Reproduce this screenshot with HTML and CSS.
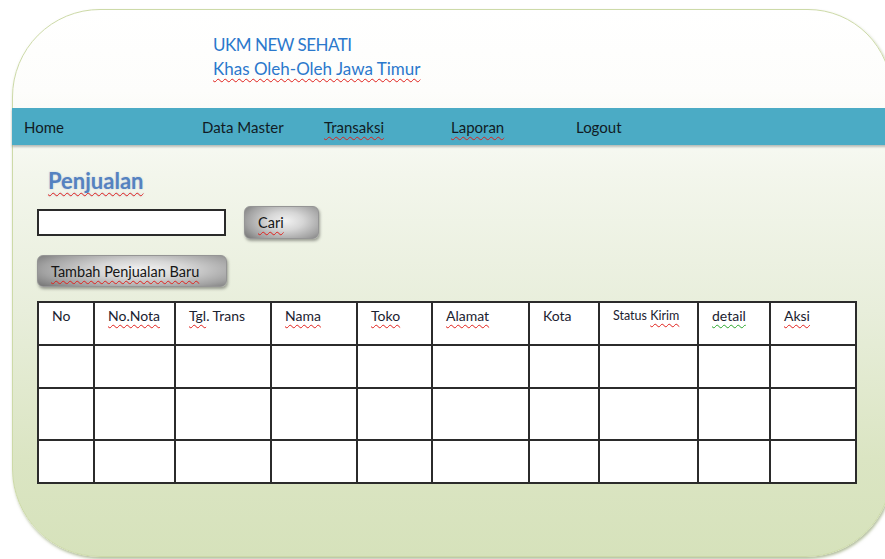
FILE: index.html
```html
<!DOCTYPE html>
<html lang="id">
<head>
<meta charset="utf-8">
<title>UKM New Sehati - Penjualan</title>
<link rel="stylesheet" href="styles.css">
</head>
<body>
<div class="frame">
  <header class="brand">
    <div class="brand-name">UKM NEW SEHATI</div>
    <div class="brand-tag"><span class="typo">Khas Oleh-Oleh Jawa Timur</span></div>
  </header>

  <nav class="menu">
    <a class="menu-item w-home">Home</a>
    <a class="menu-item w-master">Data Master</a>
    <a class="menu-item w-trans"><span class="typo">Transaksi</span></a>
    <a class="menu-item w-lap"><span class="typo">Laporan</span></a>
    <a class="menu-item">Logout</a>
  </nav>

  <main class="content">
    <h1 class="page-title"><span class="typo">Penjualan</span></h1>

    <div class="search-row">
      <input class="search-input" type="text">
      <button class="btn btn-cari"><span class="typo">Cari</span></button>
    </div>

    <button class="btn btn-add"><span class="typo">Tambah Penjualan Baru</span></button>

    <div class="grid">
      <div class="cell head">No</div>
      <div class="cell head"><span class="typo">No.Nota</span></div>
      <div class="cell head"><span class="typo">Tgl</span>. Trans</div>
      <div class="cell head"><span class="typo">Nama</span></div>
      <div class="cell head"><span class="typo">Toko</span></div>
      <div class="cell head"><span class="typo">Alamat</span></div>
      <div class="cell head">Kota</div>
      <div class="cell head small">Status <span class="typo">Kirim</span></div>
      <div class="cell head"><span class="grammar">detail</span></div>
      <div class="cell head"><span class="typo">Aksi</span></div>

      <div class="cell"></div><div class="cell"></div><div class="cell"></div><div class="cell"></div><div class="cell"></div>
      <div class="cell"></div><div class="cell"></div><div class="cell"></div><div class="cell"></div><div class="cell"></div>

      <div class="cell tall"></div><div class="cell tall"></div><div class="cell tall"></div><div class="cell tall"></div><div class="cell tall"></div>
      <div class="cell tall"></div><div class="cell tall"></div><div class="cell tall"></div><div class="cell tall"></div><div class="cell tall"></div>

      <div class="cell"></div><div class="cell"></div><div class="cell"></div><div class="cell"></div><div class="cell"></div>
      <div class="cell"></div><div class="cell"></div><div class="cell"></div><div class="cell"></div><div class="cell"></div>
    </div>
  </main>
</div>
</body>
</html>
```

FILE: styles.css
```css
html, body {
  margin: 0;
  padding: 0;
  overflow: hidden;
  background: #ffffff;
}

body {
  font-family: Lato, "Open Sans", sans-serif;
  color: #1c2530;
  width: 885px;
  height: 559px;
}

/* rounded panel holding the whole page */
.frame {
  box-sizing: border-box;
  margin: 9px 0 0 12px;
  width: 880px;
  height: 548px;
  border: 1px solid #cddaa8;
  border-radius: 88px 84px 86px 88px;
  background: linear-gradient(to bottom, #ffffff 0%, #fdfdfb 15%, #f3f6ec 30%, #e8eedb 55%, #dbe5c3 82%, #d6e2bb 100%);
  box-shadow: 1px 2px 3px rgba(120, 140, 80, 0.55);
  display: flex;
  flex-direction: column;
}

/* spell-check style squiggles */
.typo {
  text-decoration: underline wavy #e0201b;
  text-decoration-thickness: 1px;
  text-underline-offset: 3px;
  text-decoration-skip-ink: none;
}
.grammar {
  text-decoration: underline wavy #2aa52a;
  text-decoration-thickness: 1px;
  text-underline-offset: 3px;
  text-decoration-skip-ink: none;
}

.brand {
  padding: 23px 0 27px 200px;
  color: #2b78cc;
  font-size: 17px;
  line-height: 24px;
}
.brand-name {
  letter-spacing: -0.5px;
}

.menu {
  display: flex;
  align-items: center;
  height: 37px;
  padding-left: 12px;
  margin-right: -1px;
  margin-left: -1px;
  background: #4babc5;
  box-shadow: 0 2px 2px rgba(70, 80, 80, 0.35);
  font-size: 15px;
  color: #111b24;
}
.menu-item {
  display: block;
}
.w-home { width: 178px; }
.w-master { width: 122px; }
.w-trans { width: 127px; }
.w-lap { width: 125px; }

.content {
  padding: 23px 0 0 24px;
  display: flex;
  flex-direction: column;
  align-items: flex-start;
}

.page-title {
  margin: 0 0 0 11px;
  font-size: 22px;
  line-height: 26px;
  font-weight: 700;
  color: #5582c0;
  text-shadow: 0 0 2px rgba(120, 150, 200, 0.45);
}

.search-row {
  display: flex;
  align-items: center;
  gap: 18px;
  margin-top: 12px;
}

.search-input {
  box-sizing: border-box;
  width: 189px;
  height: 27px;
  margin: 0;
  border: 2px solid #2a2a2a;
  background: #ffffff;
}

.btn {
  box-sizing: border-box;
  margin: 0;
  padding: 0 0 0 13px;
  text-align: left;
  font-family: Lato, "Open Sans", sans-serif;
  font-size: 14.5px;
  color: #161616;
  border: 1px solid #959595;
  border-radius: 6px;
  background:
    radial-gradient(ellipse 70% 85% at 55% 45%, #f2f2f2 0%, #d6d6d6 35%, #a2a2a2 75%, #767676 100%);
  box-shadow: 1px 2px 3px rgba(0, 0, 0, 0.35);
}
.btn-cari {
  width: 75px;
  height: 33px;
}
.btn-add {
  width: 190px;
  height: 32px;
  margin-top: 16px;
}

/* data table drawn as a ruled grid */
.grid {
  display: grid;
  grid-template-columns: 56px 81px 96px 86px 75px 97px 70px 99px 72px 86px;
  margin-top: 14px;
  border-left: 2px solid #2b2b2b;
  border-top: 2px solid #2b2b2b;
  background: #ffffff;
}
.cell {
  box-sizing: border-box;
  height: 43px;
  border-right: 2px solid #2b2b2b;
  border-bottom: 2px solid #2b2b2b;
}
.cell.tall {
  height: 52px;
}
.head {
  padding: 5px 0 0 13px;
  font-size: 14px;
  line-height: 16px;
  color: #1b2230;
  white-space: nowrap;
}
.head.small {
  font-size: 12.5px;
  padding-left: 13px;
}
```
